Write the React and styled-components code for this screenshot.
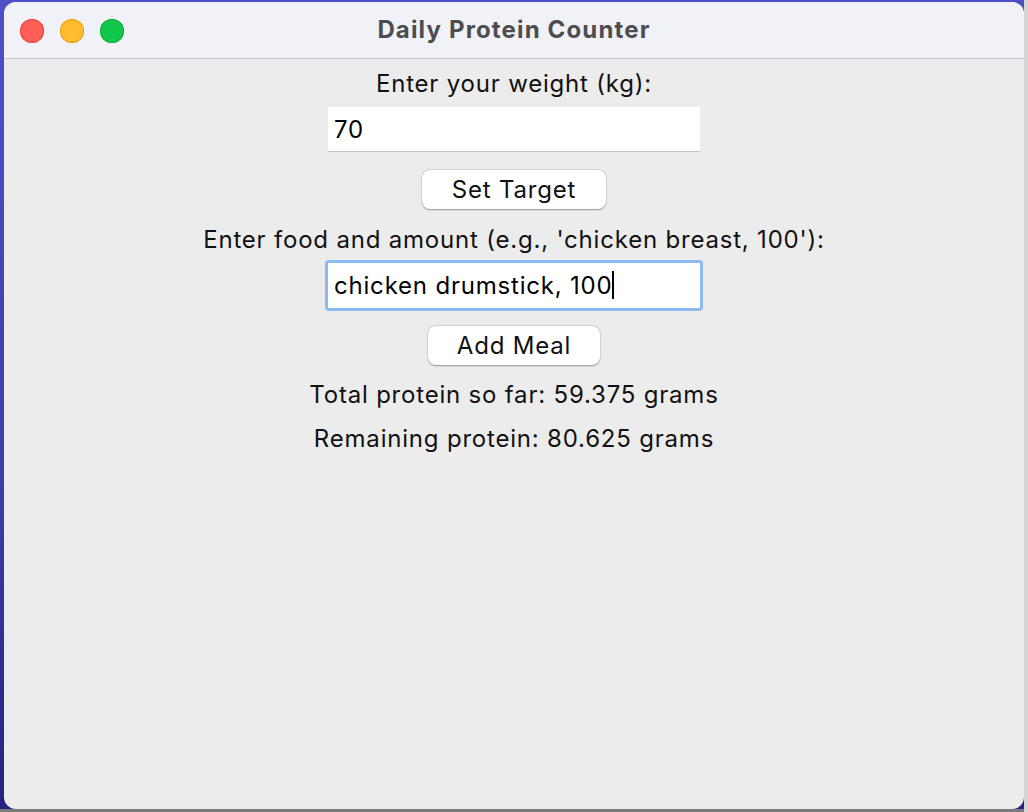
import React from 'react';
import styled, { createGlobalStyle } from 'styled-components';

const GlobalStyle = createGlobalStyle`
  html, body {
    margin: 0;
    padding: 0;
  }
  body {
    width: 1028px;
    height: 812px;
    overflow: hidden;
  }
`;

const Desktop = styled.div`
  width: 1028px;
  height: 812px;
  box-sizing: border-box;
  padding: 2px 4px 3px 4px;
  background:
    linear-gradient(to right, transparent 1024px, #d4d4d6 1024px),
    linear-gradient(to bottom, transparent 809px, #7a7a7a 809px),
    linear-gradient(to bottom, #4c51c6 0%, #3b3eaa 60%, #24237f 100%);
`;

const Window = styled.div`
  width: 1020px;
  height: 807px;
  border-radius: 12px;
  overflow: hidden;
  display: flex;
  flex-direction: column;
  background: #ececec;
  font-family: Inter, "Liberation Sans", sans-serif;
`;

const TitleBar = styled.div`
  height: 56px;
  flex: none;
  display: flex;
  align-items: center;
  position: relative;
  background: #f1f2f7;
  border-bottom: 1px solid #c9c9cb;
`;

const Lights = styled.div`
  display: flex;
  gap: 16px;
  padding-left: 16px;
  position: absolute;
  left: 0;
  top: 17px;
`;

const Light = styled.span`
  width: 24px;
  height: 24px;
  border-radius: 50%;
  background: ${(p) => p.$color};
  box-shadow: inset 0 0 0 1px ${(p) => p.$edge};
`;

const Title = styled.div`
  flex: 1;
  text-align: center;
  font-size: 24px;
  font-weight: 700;
  letter-spacing: 1.15px;
  color: #4d4d4f;
  margin-top: -2px;
`;

const Content = styled.div`
  flex: 1;
  display: flex;
  flex-direction: column;
  align-items: center;
  padding-top: 10px;
  color: #111;
  font-size: 24px;
  letter-spacing: 0.8px;
`;

const Label = styled.div`
  line-height: 30px;
  height: 30px;
  margin-top: ${(p) => p.$top || 0}px;
`;

const Ring = styled.div`
  margin-top: ${(p) => p.$top || 0}px;
  padding: 3px;
  border-radius: 4px;
  background: ${(p) => (p.$focused ? '#8cbaf0' : 'transparent')};
`;

const Field = styled.div`
  width: 372px;
  height: 45px;
  box-sizing: border-box;
  background: #fff;
  border-bottom: 1px solid ${(p) => (p.$focused ? '#fff' : '#c4c4c4')};
  display: flex;
  align-items: center;
  padding-left: 6px;
  color: #000;
`;

const Caret = styled.span`
  display: inline-block;
  width: 2px;
  height: 28px;
  background: #000;
`;

const Button = styled.button`
  margin-top: ${(p) => p.$top || 0}px;
  width: ${(p) => p.$width}px;
  height: 39px;
  border: none;
  border-radius: 8px;
  background: #fff;
  box-shadow: 0 0.5px 1.5px rgba(0, 0, 0, 0.35), 0 0 0 0.5px rgba(0, 0, 0, 0.08);
  font-family: inherit;
  font-size: inherit;
  letter-spacing: inherit;
  color: #111;
  padding: 0;
`;

export default function App() {
  return (
    <>
      <GlobalStyle />
      <Desktop>
        <Window>
          <TitleBar>
            <Lights>
              <Light $color="#ff5f57" $edge="#e2463f" />
              <Light $color="#febc2e" $edge="#e1a116" />
              <Light $color="#12c84a" $edge="#0ea83c" />
            </Lights>
            <Title>Daily Protein Counter</Title>
          </TitleBar>
          <Content>
            <Label>Enter your weight (kg):</Label>
            <Ring $top={5}>
              <Field>70</Field>
            </Ring>
            <Button $top={15} $width={184}>Set Target</Button>
            <Label $top={16}>Enter food and amount (e.g., 'chicken breast, 100'):</Label>
            <Ring $top={5} $focused>
              <Field $focused>
                chicken drumstick, 100
                <Caret />
              </Field>
            </Ring>
            <Button $top={15} $width={172}>Add Meal</Button>
            <Label $top={15}>Total protein so far: 59.375 grams</Label>
            <Label $top={14}>Remaining protein: 80.625 grams</Label>
          </Content>
        </Window>
      </Desktop>
    </>
  );
}
